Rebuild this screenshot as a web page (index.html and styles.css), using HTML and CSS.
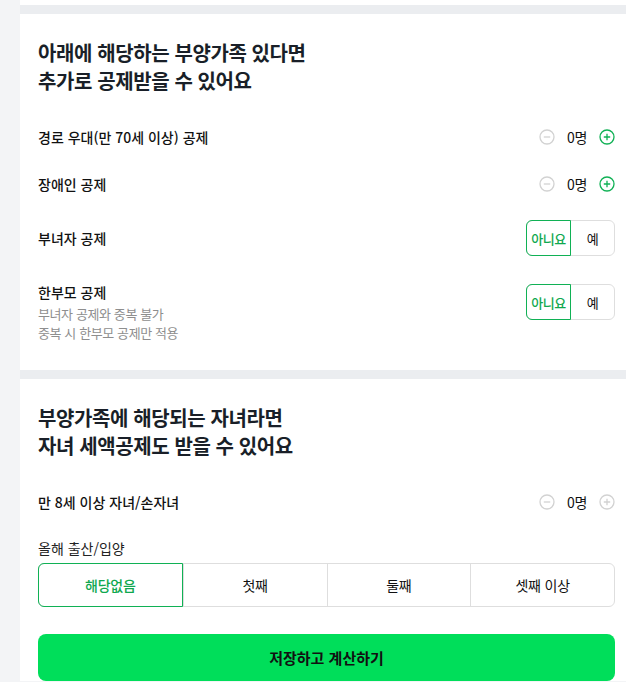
FILE: index.html
```html
<!DOCTYPE html>
<html lang="ko">
<head>
<meta charset="utf-8">
<title>공제</title>
<link rel="stylesheet" href="styles.css">
</head>
<body>
<div class="page">
  <div class="main">
    <div class="topstrip"></div>
    <div class="band"></div>
    <section class="card">
      <h2 class="title">아래에 해당하는 부양가족 있다면<br>추가로 공제받을 수 있어요</h2>
      <div class="row">
        <span class="label">경로 우대(만 70세 이상) 공제</span>
        <div class="counter">
          <svg class="icon" viewBox="0 0 16 16"><circle cx="8" cy="8" r="7" fill="none" stroke="#d2d2d2" stroke-width="1.3"/><path d="M4.8 8h6.4" stroke="#d2d2d2" stroke-width="1.3"/></svg>
          <span class="count">0명</span>
          <svg class="icon" viewBox="0 0 16 16"><circle cx="8" cy="8" r="7" fill="none" stroke="#10b155" stroke-width="1.3"/><path d="M4.8 8h6.4M8 4.8v6.4" stroke="#10b155" stroke-width="1.3"/></svg>
        </div>
      </div>
      <div class="row">
        <span class="label">장애인 공제</span>
        <div class="counter">
          <svg class="icon" viewBox="0 0 16 16"><circle cx="8" cy="8" r="7" fill="none" stroke="#d2d2d2" stroke-width="1.3"/><path d="M4.8 8h6.4" stroke="#d2d2d2" stroke-width="1.3"/></svg>
          <span class="count">0명</span>
          <svg class="icon" viewBox="0 0 16 16"><circle cx="8" cy="8" r="7" fill="none" stroke="#10b155" stroke-width="1.3"/><path d="M4.8 8h6.4M8 4.8v6.4" stroke="#10b155" stroke-width="1.3"/></svg>
        </div>
      </div>
      <div class="row">
        <span class="label">부녀자 공제</span>
        <div class="toggle">
          <span class="opt selected">아니요</span>
          <span class="opt">예</span>
        </div>
      </div>
      <div class="row row-top">
        <div class="labelblock">
          <span class="label">한부모 공제</span>
          <span class="sub">부녀자 공제와 중복 불가</span>
          <span class="sub">중복 시 한부모 공제만 적용</span>
        </div>
        <div class="toggle toggle-offset">
          <span class="opt selected">아니요</span>
          <span class="opt">예</span>
        </div>
      </div>
    </section>
    <div class="band"></div>
    <section class="card card-last">
      <h2 class="title">부양가족에 해당되는 자녀라면<br>자녀 세액공제도 받을 수 있어요</h2>
      <div class="row">
        <span class="label">만 8세 이상 자녀/손자녀</span>
        <div class="counter">
          <svg class="icon" viewBox="0 0 16 16"><circle cx="8" cy="8" r="7" fill="none" stroke="#d2d2d2" stroke-width="1.3"/><path d="M4.8 8h6.4" stroke="#d2d2d2" stroke-width="1.3"/></svg>
          <span class="count">0명</span>
          <svg class="icon" viewBox="0 0 16 16"><circle cx="8" cy="8" r="7" fill="none" stroke="#d2d2d2" stroke-width="1.3"/><path d="M4.8 8h6.4M8 4.8v6.4" stroke="#d2d2d2" stroke-width="1.3"/></svg>
        </div>
      </div>
      <div class="row row-label">
        <span class="label plain">올해 출산/입양</span>
      </div>
      <div class="segment">
        <span class="seg selected">해당없음</span>
        <span class="seg">첫째</span>
        <span class="seg">둘째</span>
        <span class="seg">셋째 이상</span>
      </div>
      <button class="submit">저장하고 계산하기</button>
    </section>
  </div>
</div>
</body>
</html>
```
FILE: styles.css
```css
* { box-sizing: border-box; }
html, body {
  margin: 0;
  padding: 0;
  background: #f3f4f6;
  font-family: "Noto Sans CJK KR", "Noto Sans", sans-serif;
  color: #111;
  overflow: hidden;
}
.page {
  padding-left: 20px;
}
.main {
  display: flex;
  flex-direction: column;
  background: #fff;
}
.topstrip {
  height: 5px;
  background: #fff;
}
.band {
  height: 9px;
  background: #ebedf0;
}
.card {
  background: #fff;
  padding: 25px 11px 15px 18px;
  display: flex;
  flex-direction: column;
}
.card-last {
  padding-bottom: 0;
}
.title {
  margin: 0 0 18px;
  font-size: 20px;
  line-height: 28px;
  font-weight: 700;
  color: #191f28;
  letter-spacing: -0.4px;
}
.row {
  display: flex;
  justify-content: space-between;
  align-items: center;
  padding: 13px 0;
}
.row-top {
  align-items: flex-start;
}
.label {
  font-size: 14px;
  line-height: 20px;
  font-weight: 500;
  color: #111;
  letter-spacing: 0;
}
.label.plain {
  font-weight: 400;
  color: #222;
}
.row-label {
  padding-bottom: 5px;
}
.labelblock {
  display: flex;
  flex-direction: column;
}
.labelblock .label {
  margin-bottom: 2px;
}
.sub {
  font-size: 13px;
  line-height: 19px;
  color: #8e8e8e;
  letter-spacing: -0.4px;
}
.counter {
  display: flex;
  align-items: center;
  height: 21px;
  gap: 12px;
}
.icon {
  width: 16px;
  height: 16px;
  display: block;
}
.count {
  font-size: 14px;
  line-height: 20px;
  color: #111;
  letter-spacing: -0.4px;
  min-width: 20px;
  text-align: center;
}
.toggle {
  display: flex;
  width: 89px;
  height: 36px;
  border: 1px solid #dedede;
  border-radius: 6px;
}
.toggle-offset {
  margin-top: 2px;
}
.opt {
  flex: 1;
  display: flex;
  align-items: center;
  justify-content: center;
  font-size: 13px;
  color: #111;
  letter-spacing: -0.4px;
}
.opt.selected {
  margin: -1px 0 -1px -1px;
  border: 1px solid #10b155;
  border-radius: 6px 0 0 6px;
  color: #10a84f;
  font-weight: 500;
}
.segment {
  display: flex;
  height: 44px;
  border: 1px solid #dedede;
  border-radius: 6px;
}
.seg {
  flex: 1;
  display: flex;
  align-items: center;
  justify-content: center;
  font-size: 14px;
  color: #111;
  letter-spacing: -0.2px;
  border-left: 1px solid #dedede;
}
.seg:first-child {
  border-left: none;
}
.seg.selected {
  margin: -1px 0 -1px -1px;
  border: 1px solid #10b155;
  border-radius: 6px 0 0 6px;
  color: #10a84f;
  font-weight: 500;
}
.submit {
  margin-top: 27px;
  height: 47px;
  width: 100%;
  border: none;
  border-radius: 8px;
  background: #00de5a;
  font-family: inherit;
  font-size: 15px;
  font-weight: 700;
  color: #111;
  letter-spacing: 0;
}
```
